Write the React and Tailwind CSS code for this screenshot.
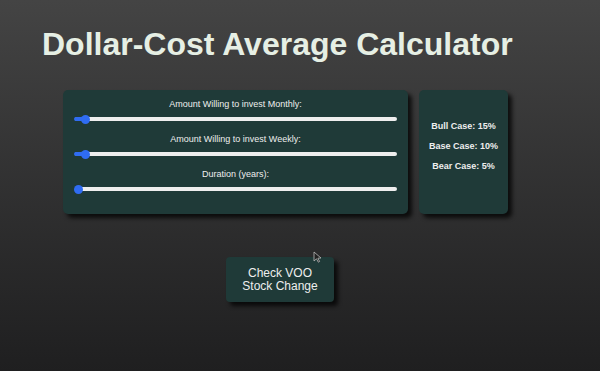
import React from "react";

const sliders = [
  { label: "Amount Willing to invest Monthly:", pos: 6 },
  { label: "Amount Willing to invest Weekly:", pos: 6 },
  { label: "Duration (years):", pos: -1 },
];

function Slider({ pos }) {
  return (
    <div className="relative h-[10px] w-[322px] flex items-center">
      <div className="h-[4px] w-full rounded-full bg-[#eeeeee]" />
      {pos > 0 && (
        <div
          className="absolute left-[-1px] h-[4px] rounded-l-full bg-[#2f6cf2]"
          style={{ width: `${pos + 5}px` }}
        />
      )}
      <div
        className="absolute h-[9px] w-[9px] rounded-full bg-[#2f6cf2]"
        style={{ left: `${pos}px` }}
      />
    </div>
  );
}

export default function App() {
  return (
    <div className="relative h-[371px] w-[600px] overflow-hidden bg-gradient-to-b from-[#444444] to-[#1f1f20] font-['Liberation_Sans',Arial,sans-serif]">
      <h1 className="pl-[42px] pt-[26px] text-[32px] font-bold leading-[36px] text-[#e6efe4]">
        Dollar-Cost Average Calculator
      </h1>

      <div className="mt-[28px] flex gap-[11px] pl-[63px]">
        <div className="flex h-[124px] w-[345px] flex-col items-center rounded-[5px] bg-[#1f3a38] pt-[8px] shadow-[4px_4px_4px_rgba(0,0,0,0.75)]">
          {sliders.map((s, i) => (
            <div key={i} className="mb-[9px] flex flex-col items-center">
              <div className="text-[9px] leading-[12px] text-[#eeeeee]">{s.label}</div>
              <div className="mt-[4px]">
                <Slider pos={s.pos} />
              </div>
            </div>
          ))}
        </div>

        <div className="flex h-[124px] w-[89px] flex-col items-center gap-[8px] rounded-[5px] bg-[#1f3a38] pt-[30px] shadow-[4px_4px_4px_rgba(0,0,0,0.75)]">
          <div className="text-[9px] font-bold leading-[12px] text-[#eeeeee]">Bull Case: 15%</div>
          <div className="text-[9px] font-bold leading-[12px] text-[#eeeeee]">Base Case: 10%</div>
          <div className="text-[9px] font-bold leading-[12px] text-[#eeeeee]">Bear Case: 5%</div>
        </div>
      </div>

      <div className="mt-[43px] flex justify-center pr-[40px]">
        <button className="h-[45px] w-[108px] rounded-[4px] bg-[#1f3a38] text-[12px] leading-[13px] text-[#eeeeee] shadow-[4px_4px_4px_rgba(0,0,0,0.75)]">
          Check VOO
          <br />
          Stock Change
        </button>
      </div>

      <svg className="absolute left-[313px] top-[251px]" width="9" height="12" viewBox="0 0 9 12">
        <path d="M1 1 L1 10 L3.5 7.8 L5.3 11.2 L6.6 10.5 L4.9 7.2 L8 7 Z" fill="#222" stroke="#bbb" strokeWidth="0.8" />
      </svg>
    </div>
  );
}
